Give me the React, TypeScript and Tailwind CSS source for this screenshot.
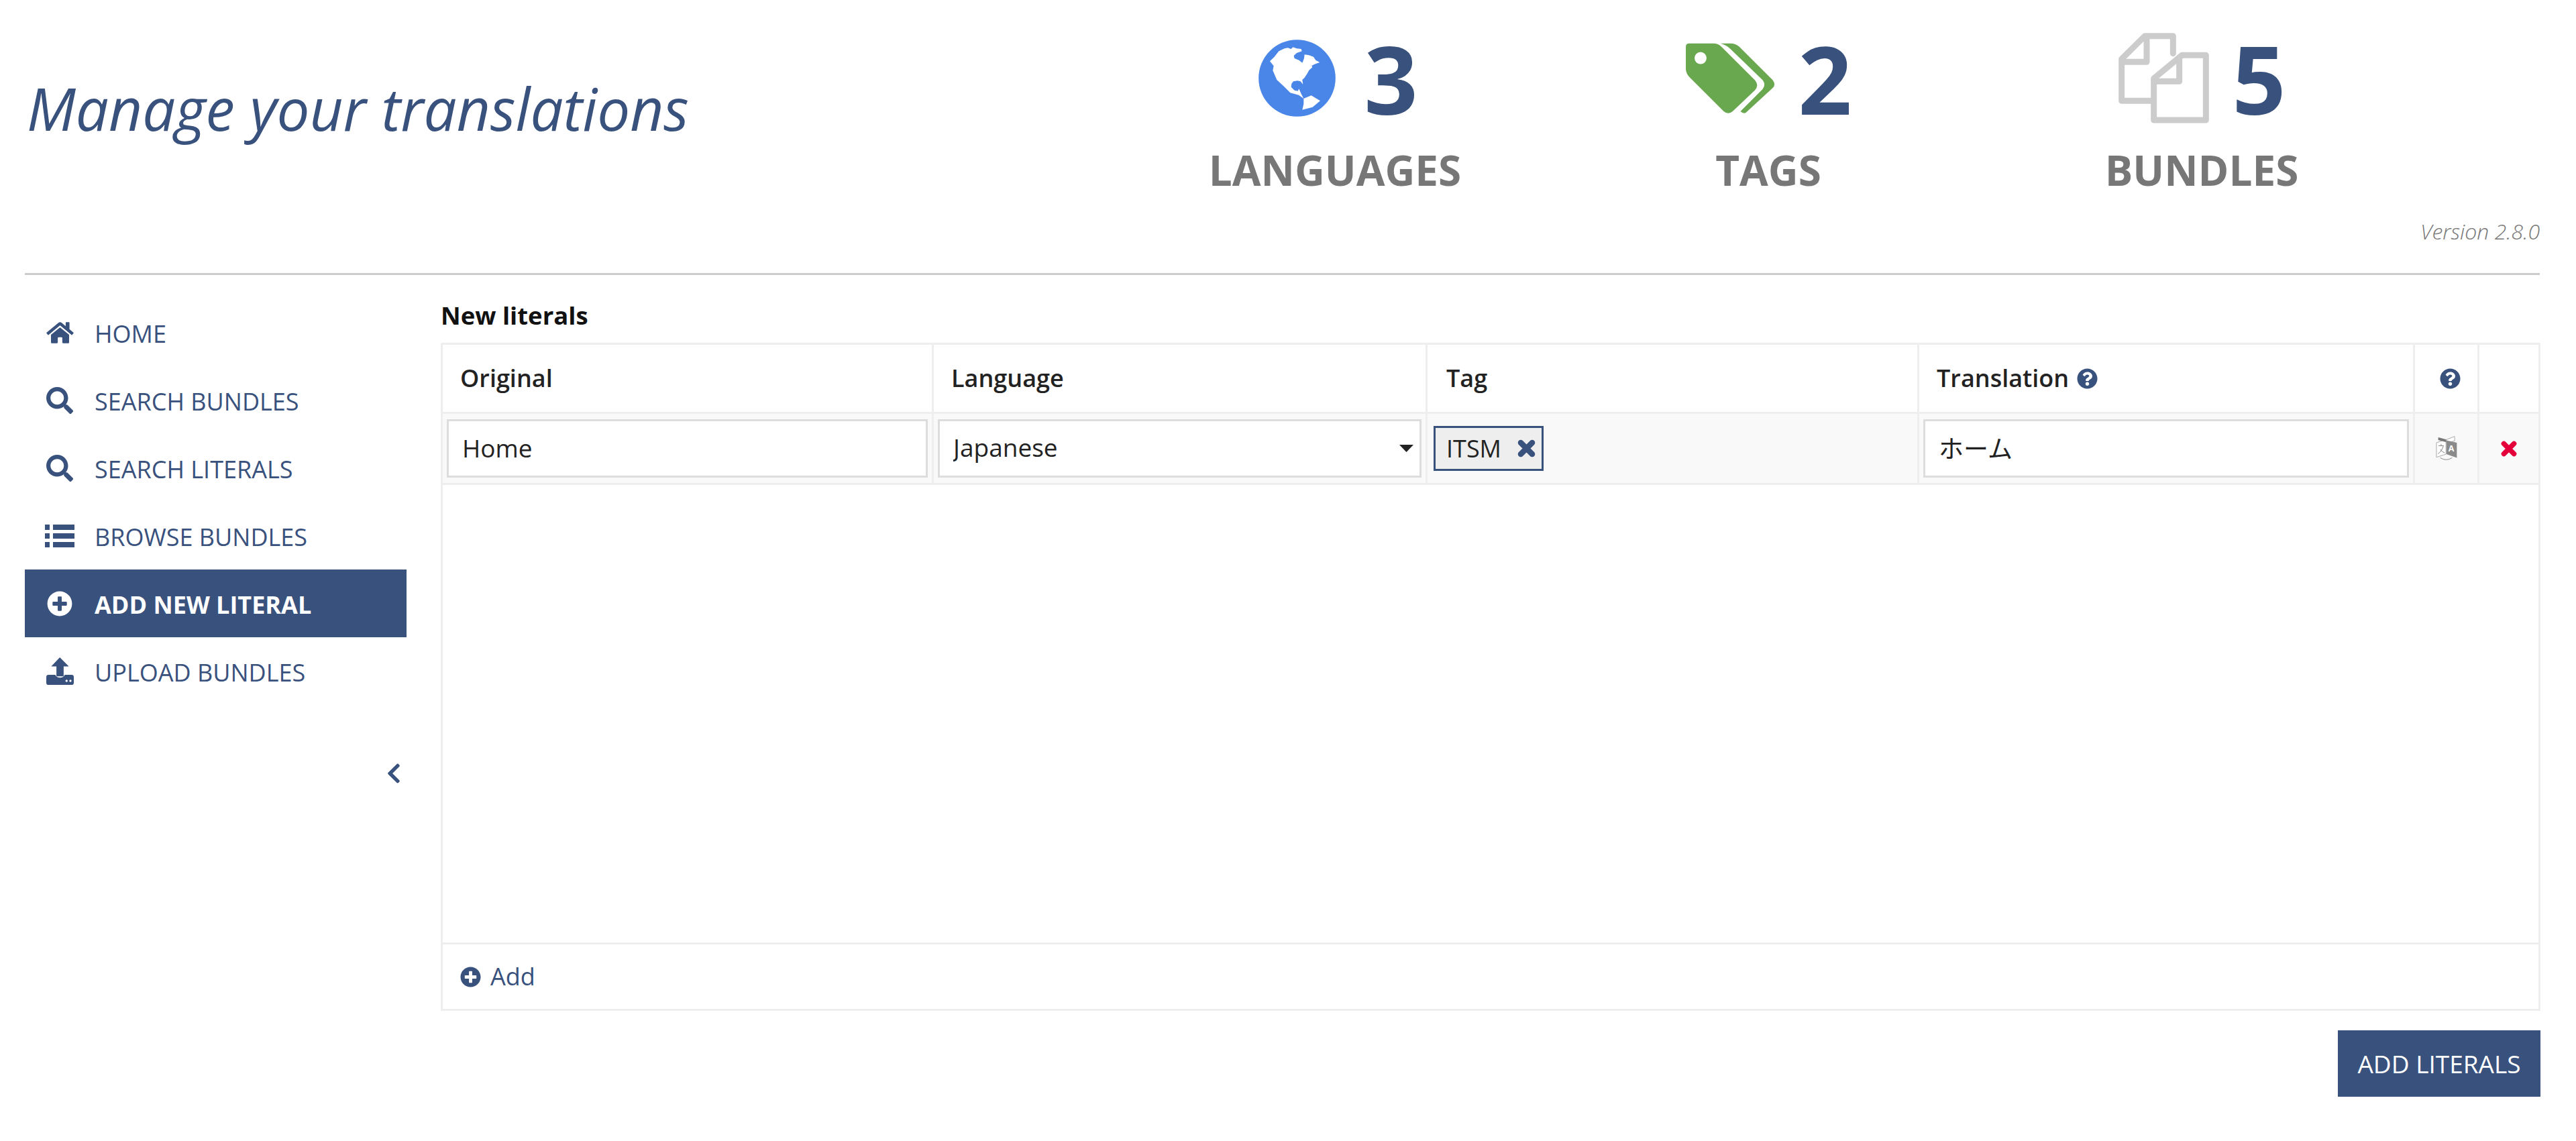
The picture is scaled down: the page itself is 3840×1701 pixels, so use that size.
import React from "react"
import {
  FaChevronLeft,
  FaHome,
  FaPlusCircle,
  FaQuestionCircle,
  FaSearch,
} from "react-icons/fa"

const GlobeIcon = () => (
  <svg viewBox="44 88 345 345" className="w-[115px] h-[115px]">
    <circle cx="216.5" cy="260.5" r="172" fill="#4a86e8" />
    <path
      fill="#fff"
      d="M95 185 L115 165 L135 140 L160 128 L175 125 L190 130 L198 122 L215 128 L235 130 L238 140 L215 148 L202 160 L205 172 L225 180 L240 192 L248 172 L250 155 L270 158 L290 165 L300 180 L318 190 L295 198 L282 205 L285 212 L270 225 L262 240 L250 258 L240 268 L243 288 L232 275 L218 272 L200 275 L192 285 L190 300 L205 315 L220 318 L225 308 L235 330 L246 352 L224 336 L186 326 L156 296 L126 268 L108 226 L112 206 Z"
    />
    <path fill="#fff" d="M246 352 L280 338 L320 362 L286 390 L240 402 L246 376 Z" />
  </svg>
)

const TagsIcon = () => (
  <svg viewBox="30 35 410 325" className="w-[137px] h-[108px]">
    <path
      fill="#6aa84f"
      fillRule="evenodd"
      d="M50 40 H160 Q180 40 195 55 L345 205 Q365 228 345 250 L245 345 Q225 362 205 345 L55 195 Q35 175 35 155 V55 Q35 40 50 40 Z M101 79 A27 27 0 1 0 101.1 133 A27 27 0 1 0 101 79 Z"
    />
    <path
      fill="#6aa84f"
      d="M190 40 H235 Q258 40 275 55 L425 205 Q440 225 425 240 L305 350 Q295 358 280 345 L380 245 Q395 225 380 205 L235 65 Q215 45 190 40 Z"
    />
  </svg>
)

const DocsIcon = () => (
  <svg
    viewBox="54 28 405 405"
    className="w-[135px] h-[135px]"
    fill="none"
    stroke="#cccccc"
    strokeWidth="27"
    strokeLinejoin="round"
    strokeLinecap="round"
  >
    <path d="M298 120 V42 H172 L68 145 V332 H205" />
    <path d="M180 50 V158 H72" />
    <path d="M338 128 H445 V418 H212 V232 Z" />
    <path d="M326 138 V245 H218" />
  </svg>
)

const ListIcon = () => (
  <svg viewBox="0 0 44 34" className="w-[44px] h-[34px]" fill="#39517d">
    <rect x="0" y="0" width="7" height="8" />
    <rect x="12" y="0" width="32" height="8" />
    <rect x="0" y="13" width="7" height="8" />
    <rect x="12" y="13" width="32" height="8" />
    <rect x="0" y="26" width="7" height="8" />
    <rect x="12" y="26" width="32" height="8" />
  </svg>
)

const UploadIcon = () => (
  <svg viewBox="58 28 122 122" className="w-[41px] h-[41px]">
    <path fill="#39517d" d="M118 28 L158 68 H135 V112 H103 V68 H80 Z" />
    <path
      fill="#39517d"
      fillRule="evenodd"
      d="M68 105 H98 Q104 118 119 118 Q134 118 140 105 H170 Q180 105 180 115 V140 Q180 150 170 150 H68 Q58 150 58 140 V115 Q58 105 68 105 Z"
    />
    <circle cx="148" cy="132" r="5" fill="#fff" />
    <circle cx="165" cy="132" r="5" fill="#fff" />
  </svg>
)

const TranslateIcon = () => (
  <svg viewBox="145 418 95 112" className="w-[32px] h-[37px]">
    <path fill="#fff" stroke="#a8a8a8" strokeWidth="3" d="M147 448 L190 434 V500 L147 514 Z" />
    <path fill="#777777" d="M155 424 L192 434 V446 L155 436 Z" />
    <path fill="#fff" stroke="#a8a8a8" strokeWidth="3" d="M192 434 L229 420 V440 L192 450 Z" />
    <path fill="#8a8a8a" d="M192 438 L239 448 V516 L192 500 Z" />
    <path fill="none" stroke="#888888" strokeWidth="3" d="M156 462 H180 M168 454 V464 M178 464 Q170 488 154 498 M164 478 Q172 490 184 494" />
    <text x="201" y="488" fontSize="38" fontWeight="700" fill="#fff">A</text>
    <path fill="none" stroke="#888888" strokeWidth="3" d="M164 516 Q190 534 218 516" />
  </svg>
)

// La cruz gruesa del chip y de la fila
const CrossIcon = ({ className, color }: { className: string; color: string }) => (
  <svg viewBox="0 0 27 27" className={className} fill="none" stroke={color} strokeWidth="8.5" strokeLinecap="round">
    <path d="M5 5 L22 22 M22 5 L5 22" />
  </svg>
)

const navItems = [
  { label: "HOME", icon: <FaHome className="w-[41px] h-[36px]" /> },
  { label: "SEARCH BUNDLES", icon: <FaSearch className="w-[40px] h-[40px]" /> },
  { label: "SEARCH LITERALS", icon: <FaSearch className="w-[40px] h-[40px]" /> },
  { label: "BROWSE BUNDLES", icon: <ListIcon /> },
  { label: "ADD NEW LITERAL", icon: <FaPlusCircle className="w-[38px] h-[38px]" />, active: true },
  { label: "UPLOAD BUNDLES", icon: <UploadIcon /> },
]

const stats = [
  { value: "3", label: "LANGUAGES", icon: <GlobeIcon />, row: "gap-[42px] pl-[10px]" },
  { value: "2", label: "TAGS", icon: <TagsIcon />, row: "gap-[32px]" },
  { value: "5", label: "BUNDLES", icon: <DocsIcon />, row: "gap-[34px] pl-[2px]" },
]

const gridCols = "grid grid-cols-[732px_736px_733px_739px_96px_1fr]"
const cellBorder = "border-r-[3px] border-[#eeeeee]"
const fieldBox = "w-full h-[87px] border-[3px] border-[#dddddd] bg-white px-[20px] pb-[3px] text-[37px] text-[#222222] outline-none"

export default function App() {
  return (
    <div className="w-full h-[1701px] pl-[37px] pr-[53px] bg-white font-['Open_Sans','Noto_Sans_CJK_JP',sans-serif]">
      {/* Cabecera */}
      <header className="h-[410px] pt-[49px] border-b-[3px] border-[#cccccc] mr-[1px]">
        <div className="flex">
          <h1 className="w-[1630px] pl-[3px] mt-[47px] text-[87px] leading-[130px] italic font-normal text-[#39517d]">
            Manage your translations
          </h1>
          <div className="flex">
            {stats.map((s) => (
              <div key={s.label} className="w-[646px] flex flex-col items-center">
                <div className={`h-[135px] flex items-center ${s.row}`}>
                  {s.icon}
                  <span className="text-[140px] leading-none font-bold text-[#39517d]">{s.value}</span>
                </div>
                <div className="mt-[37px] text-[62px] leading-[64px] font-bold text-[#777777]">{s.label}</div>
              </div>
            ))}
          </div>
        </div>
        <div className="mt-[40px] text-right text-[32px] leading-[40px] italic font-light text-[#777777]">
          Version 2.8.0
        </div>
      </header>

      <div className="flex">
        {/* Menu lateral */}
        <nav className="w-[569px] mr-[51px] pt-[35px] shrink-0">
          {navItems.map((item) => (
            <div
              key={item.label}
              className={
                item.active
                  ? "h-[101px] flex items-center bg-[#39517d] text-white font-bold"
                  : "h-[101px] flex items-center text-[#39517d]"
              }
            >
              <span className="w-[104px] flex justify-center">{item.icon}</span>
              <span className="pt-[5px] text-[36px]">{item.label}</span>
            </div>
          ))}
          <div className="flex justify-end pr-[7px] mt-[85px] text-[#39517d]">
            <FaChevronLeft className="w-[24px] h-[34px]" />
          </div>
        </nav>

        {/* Tabla de literales */}
        <main className="flex-1">
          <div className="pt-[34px] h-[101px]">
            <h2 className="text-[36.5px] leading-[52px] font-bold text-[#111111]">New literals</h2>
          </div>
          <div className="h-[996px] flex flex-col border-[3px] border-[#eeeeee]">
            <div className={`${gridCols} h-[103px] border-b-[3px] border-[#eeeeee] text-[36px] font-semibold text-[#222222]`}>
              <div className={`${cellBorder} flex items-center pl-[26px]`}>Original</div>
              <div className={`${cellBorder} flex items-center pl-[26px]`}>Language</div>
              <div className={`${cellBorder} flex items-center pl-[28px]`}>Tag</div>
              <div className={`${cellBorder} flex items-center gap-[12px] pl-[26px]`}>
                Translation
                <FaQuestionCircle className="w-[31px] h-[31px] text-[#39517d]" />
              </div>
              <div className={`${cellBorder} flex items-center justify-center pl-[12px]`}>
                <FaQuestionCircle className="w-[31px] h-[31px] text-[#39517d]" />
              </div>
              <div />
            </div>

            <div className={`${gridCols} h-[106px] border-b-[3px] border-[#eeeeee] bg-[#f9f9f9]`}>
              <div className={`${cellBorder} flex items-center px-[6px]`}>
                <input readOnly value="Home" className={fieldBox} />
              </div>
              <div className={`${cellBorder} flex items-center px-[6px]`}>
                <div className="relative w-full">
                  <select defaultValue="ja" className={`${fieldBox} appearance-none px-[16px]`}>
                    <option value="ja">Japanese</option>
                  </select>
                  <svg viewBox="0 0 21 11" className="absolute right-[12px] top-[38px] w-[21px] h-[11px]" fill="#222222">
                    <path d="M0 0 H21 L10.5 11 Z" />
                  </svg>
                </div>
              </div>
              <div className={`${cellBorder} flex items-center pl-[9px]`}>
                <div className="h-[67px] w-[164px] flex items-center gap-[24px] pl-[16px] border-[3px] border-[#39517d] bg-[#eeeeee] text-[36px] text-[#222222]">
                  ITSM
                  <CrossIcon className="w-[27px] h-[27px]" color="#39517d" />
                </div>
              </div>
              <div className={`${cellBorder} flex items-center px-[6px]`}>
                <input readOnly value="ホーム" className={fieldBox} />
              </div>
              <div className={`${cellBorder} flex items-center justify-center`}>
                <TranslateIcon />
              </div>
              <div className="flex items-center justify-center">
                <CrossIcon className="w-[24px] h-[24px]" color="#e4003a" />
              </div>
            </div>

            <div className="flex-1" />

            <div className="h-[99px] flex items-center gap-[14px] pl-[26px] border-t-[3px] border-[#eeeeee] text-[36px] text-[#39517d]">
              <FaPlusCircle className="w-[31px] h-[31px]" />
              Add
            </div>
          </div>
          <div className="mt-[29px] flex justify-end">
            <button className="w-[302px] h-[99px] bg-[#39517d] text-white text-[37px]">ADD LITERALS</button>
          </div>
        </main>
      </div>
    </div>
  )
}
